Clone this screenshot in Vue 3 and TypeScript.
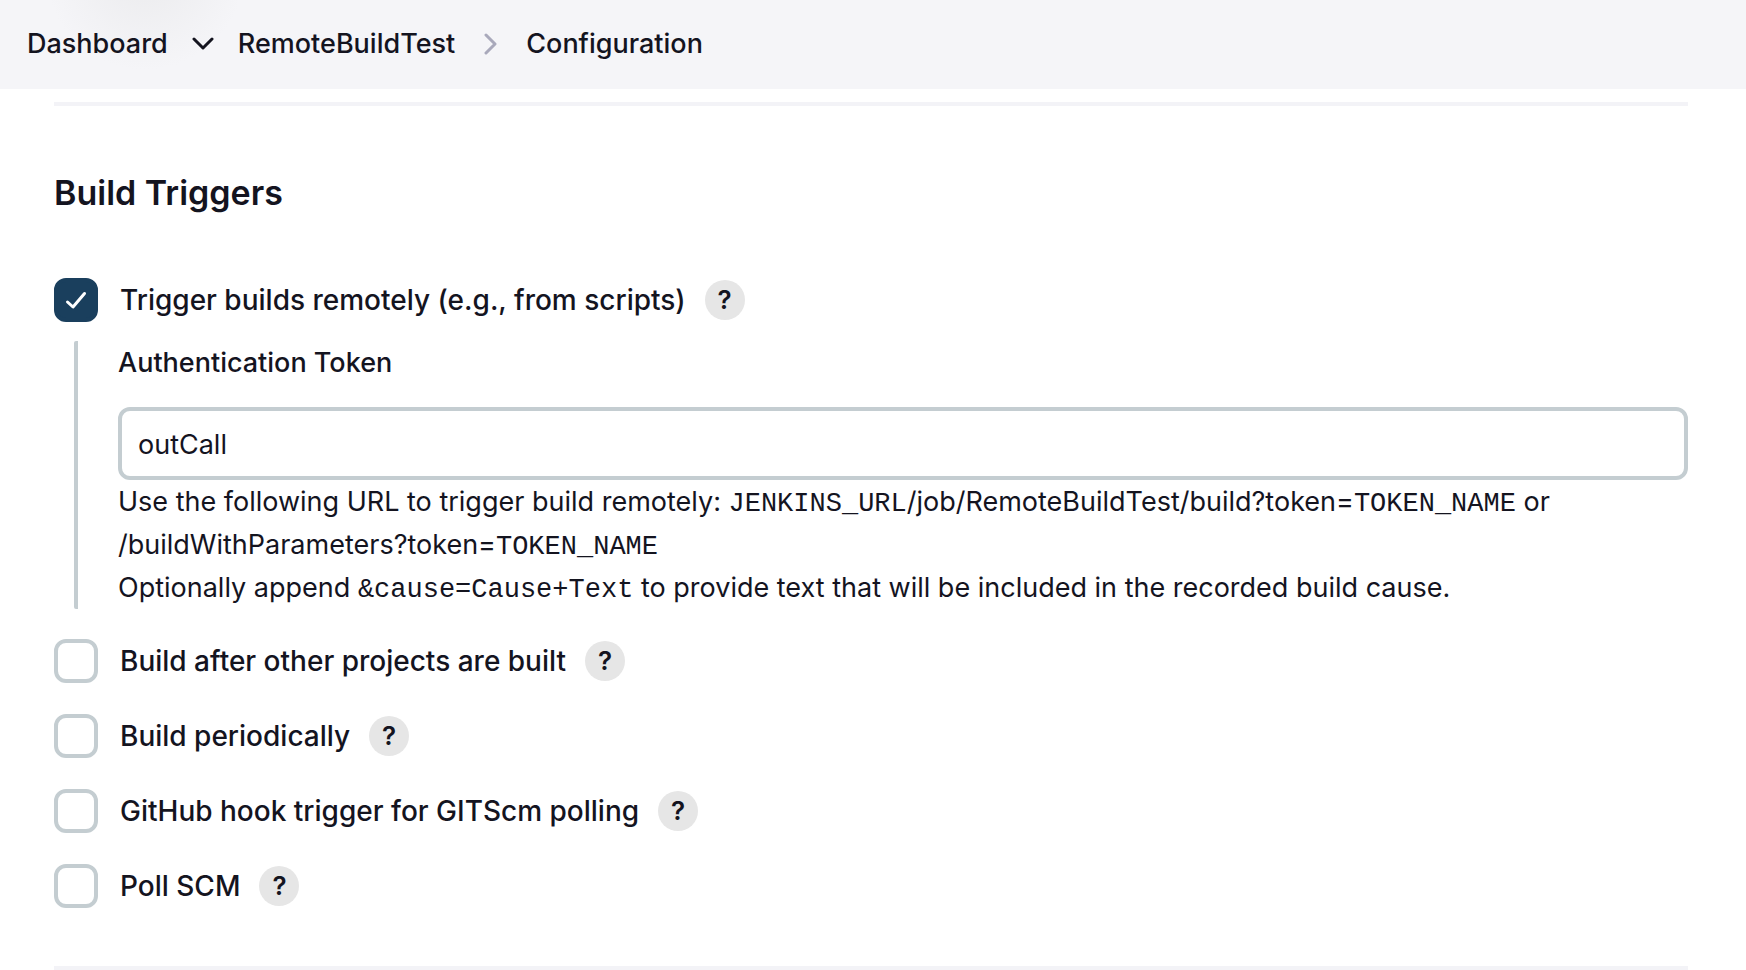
<script setup lang="ts">
import { ref } from 'vue'

interface Trigger {
  id: string
  label: string
  checked: boolean
}

const token = ref('outCall')
const triggers = ref<Trigger[]>([
  { id: 'remote', label: 'Trigger builds remotely (e.g., from scripts)', checked: true },
  { id: 'upstream', label: 'Build after other projects are built', checked: false },
  { id: 'periodic', label: 'Build periodically', checked: false },
  { id: 'github', label: 'GitHub hook trigger for GITScm polling', checked: false },
  { id: 'poll', label: 'Poll SCM', checked: false },
])
</script>

<template>
  <div class="page">
    <nav class="breadcrumbs" aria-label="Breadcrumb">
      <a href="#">Dashboard</a>
      <button type="button" class="crumb-menu" aria-label="Dashboard menu">
        <svg width="22" height="14" viewBox="0 0 22 14" aria-hidden="true">
          <path d="M2 2l9 9 9-9" />
        </svg>
      </button>
      <a href="#">RemoteBuildTest</a>
      <svg class="separator" width="14" height="22" viewBox="0 0 14 22" aria-hidden="true">
        <path d="M2 2l9 9-9 9" />
      </svg>
      <span aria-current="page">Configuration</span>
    </nav>

    <main class="content">
      <hr />
      <section>
        <h2>Build Triggers</h2>
        <div class="triggers">
          <div v-for="t in triggers" :key="t.id">
            <div class="row">
              <span class="tick">
                <input :id="t.id" v-model="t.checked" type="checkbox" />
                <svg v-if="t.checked" width="44" height="44" viewBox="0 0 44 44" aria-hidden="true">
                  <path d="M13.500 24l5.500 5 11.500-13.500" />
                </svg>
              </span>
              <label :for="t.id">{{ t.label }}</label>
              <button type="button" class="help" :aria-label="`Help for ${t.label}`">?</button>
            </div>
            <div v-if="t.id === 'remote' && t.checked" class="nested">
              <label for="token">Authentication Token</label>
              <input id="token" v-model="token" type="text" />
              <p>
                Use the following URL to trigger build remotely:
                <code>JENKINS_URL</code>/job/RemoteBuildTest/build?token=<code>TOKEN_NAME</code> or<br />
                /buildWithParameters?token=<code>TOKEN_NAME</code><br />
                Optionally append <code>&amp;cause=Cause+Text</code> to provide text that will be included in the
                recorded build cause.
              </p>
            </div>
          </div>
        </div>
      </section>
      <hr />
    </main>
  </div>
</template>

<style>
body {
  margin: 0;
  background: #fff;
}
</style>

<style scoped>
.page {
  font-family: Inter, 'Liberation Sans', sans-serif;
  font-size: 27px;
  line-height: 43px;
  color: #14141f;
}

.breadcrumbs {
  display: flex;
  align-items: center;
  height: 89px;
  padding: 0 27px 2px;
  box-sizing: border-box;
  font-weight: 500;
  background: radial-gradient(circle at 145px -30px, #ebebed 0, #f5f5f8 100px) #f5f5f8;
}

.breadcrumbs a {
  color: inherit;
  text-decoration: none;
}

.crumb-menu {
  display: flex;
  margin: 0 24px;
  padding: 0;
  border: 0;
  background: none;
}

svg path {
  fill: none;
  stroke: #14141f;
  stroke-width: 3;
  stroke-linecap: round;
  stroke-linejoin: round;
}

.separator {
  margin: 0 28px 0 29px;
}

.separator path {
  stroke: #a9a9bb;
}

.content {
  padding: 13px 58px 0 54px;
}

hr {
  height: 4px;
  margin: 0;
  border: 0;
  background: #f3f3f7;
}

h2 {
  margin: 65px 0 63px;
  font-size: 34px;
  line-height: 44px;
  font-weight: 600;
}

.triggers {
  display: flex;
  flex-direction: column;
  padding-bottom: 27px;
}

.row {
  display: flex;
  align-items: center;
  height: 44px;
  font-size: 28px;
  font-weight: 500;
}

.row:last-child {
  margin-bottom: 31px;
}

.row label {
  margin: 0 19px 0 22px;
  padding-top: 1px;
}

.tick {
  display: grid;
  width: 44px;
  height: 44px;
}

.tick > * {
  grid-area: 1 / 1;
}

.tick input {
  appearance: none;
  width: 44px;
  height: 44px;
  margin: 0;
  border: 4px solid #c4cdd1;
  border-radius: 12px;
  background: #fff;
}

.tick input:checked {
  border-color: #1a3f5d;
  background: #1a3f5d;
}

.tick svg {
  pointer-events: none;
}

.tick path {
  stroke: #fff;
}

.help {
  width: 40px;
  height: 40px;
  padding: 0;
  border: 0;
  border-radius: 50%;
  background: #e6e6e6;
  color: #14141f;
  font-family: inherit;
  font-size: 26px;
  line-height: 40px;
  font-weight: 600;
}

.nested {
  display: flex;
  flex-direction: column;
  margin: 19px 0 30px 20px;
  padding-left: 40px;
  border-left: 4px solid #c4cdd1;
  border-radius: 2px;
}

.nested label {
  margin-bottom: 23px;
  font-weight: 500;
}

.nested input {
  width: 100%;
  height: 73px;
  box-sizing: border-box;
  padding: 2px 16px 0;
  border: 4px solid #c4cdd1;
  border-radius: 12px;
  background: #fff;
  color: inherit;
  font: inherit;
}

.nested p {
  margin: 0;
}

code {
  font-family: 'Liberation Mono', monospace;
  font-size: 27px;
  line-height: 1;
}
</style>
